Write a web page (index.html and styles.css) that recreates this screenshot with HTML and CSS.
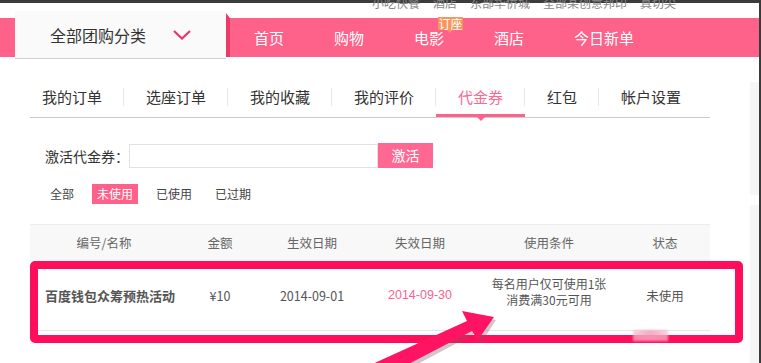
FILE: index.html
```html
<!DOCTYPE html>
<html lang="zh-CN">
<head>
<meta charset="utf-8">
<title>我的代金券</title>
<link rel="stylesheet" href="styles.css">
</head>
<body>
<div class="page">
  <div class="main">
    <div class="topbar">
      <div class="toplinks">
        <span>小吃快餐</span><span>酒店</span><span>东部华侨城</span><span>全部某创意邦印</span><span>真切尖</span>
      </div>
    </div>
    <div class="nav">
      <div class="cat">
        <span class="cat-text">全部团购分类</span>
        <svg class="chev" width="18" height="10" viewBox="0 0 18 10"><polyline points="1,1 9,8.5 17,1" fill="none" stroke="#e8356a" stroke-width="2.2"/></svg>
      </div>
      <ul class="navlinks">
        <li>首页</li>
        <li>购物</li>
        <li class="has-badge">电影<span class="badge">订座</span></li>
        <li>酒店</li>
        <li>今日新单</li>
      </ul>
    </div>
    <div class="body">
      <div class="content">
        <ul class="tabs">
          <li>我的订单</li>
          <li>选座订单</li>
          <li>我的收藏</li>
          <li>我的评价</li>
          <li class="active">代金券</li>
          <li>红包</li>
          <li class="last">帐户设置</li>
        </ul>
        <div class="activate">
          <label class="act-label">激活代金券：</label>
          <input class="act-input" type="text">
          <button class="act-btn">激活</button>
        </div>
        <div class="filters">
          <span class="filter">全部</span>
          <span class="filter on">未使用</span>
          <span class="filter">已使用</span>
          <span class="filter">已过期</span>
        </div>
        <table class="coupons">
          <colgroup>
            <col class="c1"><col class="c2"><col class="c3"><col class="c4"><col class="c5"><col class="c6">
          </colgroup>
          <thead>
            <tr><th>编号/名称</th><th>金额</th><th>生效日期</th><th>失效日期</th><th>使用条件</th><th>状态</th></tr>
          </thead>
          <tbody>
            <tr>
              <td class="name">百度钱包众筹预热活动</td>
              <td>¥10</td>
              <td>2014-09-01</td>
              <td class="expire">2014-09-30</td>
              <td class="cond">每名用户仅可使用1张<br>消费满30元可用</td>
              <td>未使用</td>
            </tr>
          </tbody>
        </table>
      </div>
      <div class="side">
        <div class="side-block"></div>
        <div class="side-block grow"></div>
      </div>
    </div>
  </div>
  <div class="edge"></div>

  <div class="mark-box"></div>
  <div class="mark-smudge"></div>
  <svg class="mark-arrow" width="140" height="70" viewBox="360 300 140 70">
    <polygon points="496,320 465,315 469,325 372,370 380,384 474,334 481,343" fill="#7a5a64" opacity="0.35"/>
    <polygon points="494,317 462,311 467,321 368,366 376,381 472,331 478,340" fill="#ff1463"/>
  </svg>
</div>
</body>
</html>
```

FILE: styles.css
```css
* { box-sizing: border-box; }
html, body { margin: 0; padding: 0; background: #fff; }
body {
  font-family: "Noto Sans CJK SC", "Liberation Sans", sans-serif;
  color: #333;
  overflow: hidden;
}
ul { margin: 0; padding: 0; list-style: none; }

.page {
  position: relative;
  display: flex;
  width: 761px;
  height: 363px;
  overflow: hidden;
}
.main { width: 759px; flex: none; display: flex; flex-direction: column; }
.edge { width: 2px; background: #3a3a3a; flex: none; }

/* top links */
.topbar {
  height: 18px;
  overflow: hidden;
  box-shadow: inset 0 3px 0 #3c3c3c;
}
.toplinks {
  margin-top: -3px;
  padding-left: 372px;
  display: flex;
  gap: 13px;
  font-size: 12px;
  line-height: 12px;
  color: #888;
}

/* nav */
.nav {
  height: 39px;
  background: #fe6189;
  display: flex;
  align-items: flex-start;
}
.cat {
  position: relative;
  margin-left: 15px;
  margin-top: -7px;
  width: 211px;
  height: 48px;
  background: #fafafa;
  border-bottom: 1px solid #cfcfcf;
  display: flex;
  align-items: center;
  padding-left: 35px;
  flex: none;
}
.cat::after {
  content: "";
  position: absolute;
  right: -4px;
  top: 2px;
  width: 4px;
  height: 44px;
  background: #ea3a68;
  clip-path: polygon(0 0, 100% 12%, 100% 100%, 0 100%);
}
.cat-text {
  font-size: 16px;
  line-height: 20px;
  color: #333;
}
.chev { margin-left: 27px; margin-top: 1px; }

.navlinks {
  display: flex;
  margin-left: 3px;
}
.navlinks li {
  position: relative;
  padding: 0 25px;
  font-size: 15px;
  line-height: 39px;
  color: #fff;
}
.badge {
  position: absolute;
  left: 49px;
  top: -1px;
  width: 25px;
  height: 13px;
  background: #f7955c;
  color: #fff;
  font-size: 12px;
  line-height: 13px;
  text-align: center;
}
.badge::after {
  content: "";
  position: absolute;
  left: 9px;
  bottom: -3px;
  border-left: 3px solid transparent;
  border-right: 3px solid transparent;
  border-top: 3px solid #f7955c;
}

/* body */
.body { display: flex; flex: 1; }
.content { margin-left: 30px; width: 680px; flex: none; }
.side {
  margin-left: auto;
  width: 9px;
  margin-top: 25px;
  display: flex;
  flex-direction: column;
  gap: 10px;
}
.side-block { height: 113px; background: #f6f6f6; }
.side-block.grow { flex: 1; }

/* tabs */
.tabs {
  margin-top: 23px;
  display: flex;
  border-bottom: 1px solid #cccccc;
  height: 38px;
}
.tabs li {
  position: relative;
  padding: 0 22px;
  font-size: 15px;
  line-height: 34px;
  height: 37px;
  color: #333;
}
.tabs li:first-child { padding-left: 12px; }
.tabs li::after {
  content: "";
  position: absolute;
  right: 0;
  top: 8px;
  width: 1px;
  height: 18px;
  background: #e8e8e8;
}
.tabs li.last::after { display: none; }
.tabs li.active {
  color: #fb6890;
  border-bottom: 3px solid #fe6189;
}
.tabs li.active::before {
  content: "";
  position: absolute;
  left: 50%;
  bottom: -7px;
  margin-left: -4px;
  border-left: 4px solid transparent;
  border-right: 4px solid transparent;
  border-top: 4px solid #fe6189;
}

/* activate */
.activate {
  margin-top: 25px;
  padding-left: 15px;
  display: flex;
  align-items: center;
  height: 25px;
}
.act-label { font-size: 14px; line-height: 20px; color: #333; width: 84px; }
.act-input {
  width: 249px;
  height: 24px;
  border: 1px solid #e2e2e2;
  margin: 0;
  padding: 0;
  outline: none;
}
.act-btn {
  width: 55px;
  height: 25px;
  border: none;
  margin: 0;
  padding: 0;
  background: #ff6893;
  color: #fff;
  font-family: inherit;
  font-size: 14px;
  line-height: 25px;
}

/* filters */
.filters {
  margin-top: 16px;
  padding-left: 15px;
  display: flex;
  gap: 13px;
}
.filter {
  padding: 0 5px;
  font-size: 12px;
  line-height: 20px;
  height: 20px;
  color: #444;
}
.filter.on { background: #fe6189; color: #fff; }

/* table */
.coupons {
  margin-top: 20px;
  width: 680px;
  border-collapse: collapse;
  table-layout: fixed;
}
col.c1 { width: 148px; }
col.c2 { width: 84px; }
col.c3 { width: 100px; }
col.c4 { width: 116px; }
col.c5 { width: 142px; }
col.c6 { width: 90px; }
.coupons th {
  height: 36px;
  background: #f8f8f8;
  border-top: 1px solid #ececec;
  font-weight: normal;
  font-size: 12.5px;
  color: #666;
  text-align: center;
  padding: 0;
}
.coupons td {
  height: 70px;
  border-bottom: 1px solid #e6e6e6;
  text-align: center;
  font-size: 12.5px;
  color: #555;
  padding: 0;
}
.coupons td.name {
  text-align: left;
  padding-left: 15px;
  font-weight: bold;
  font-size: 13px;
  color: #555;
  white-space: nowrap;
}
.coupons td.expire { color: #f7648f; font-family: "Liberation Sans", sans-serif; }
.coupons td.cond { font-size: 12px; line-height: 16px; color: #555; padding-bottom: 6px; }

/* annotations */
.mark-box {
  position: absolute;
  left: 30px;
  top: 261px;
  width: 713px;
  height: 82px;
  border: 8px solid #ff0f5b;
  border-radius: 5px;
}
.mark-smudge {
  position: absolute;
  left: 633px;
  top: 330px;
  width: 35px;
  height: 11px;
  background: linear-gradient(90deg, rgba(248,190,210,0.7), rgba(245,160,190,0.9), rgba(248,190,210,0.7));
  filter: blur(1px);
}
.mark-arrow {
  position: absolute;
  left: 360px;
  top: 300px;
}
```
